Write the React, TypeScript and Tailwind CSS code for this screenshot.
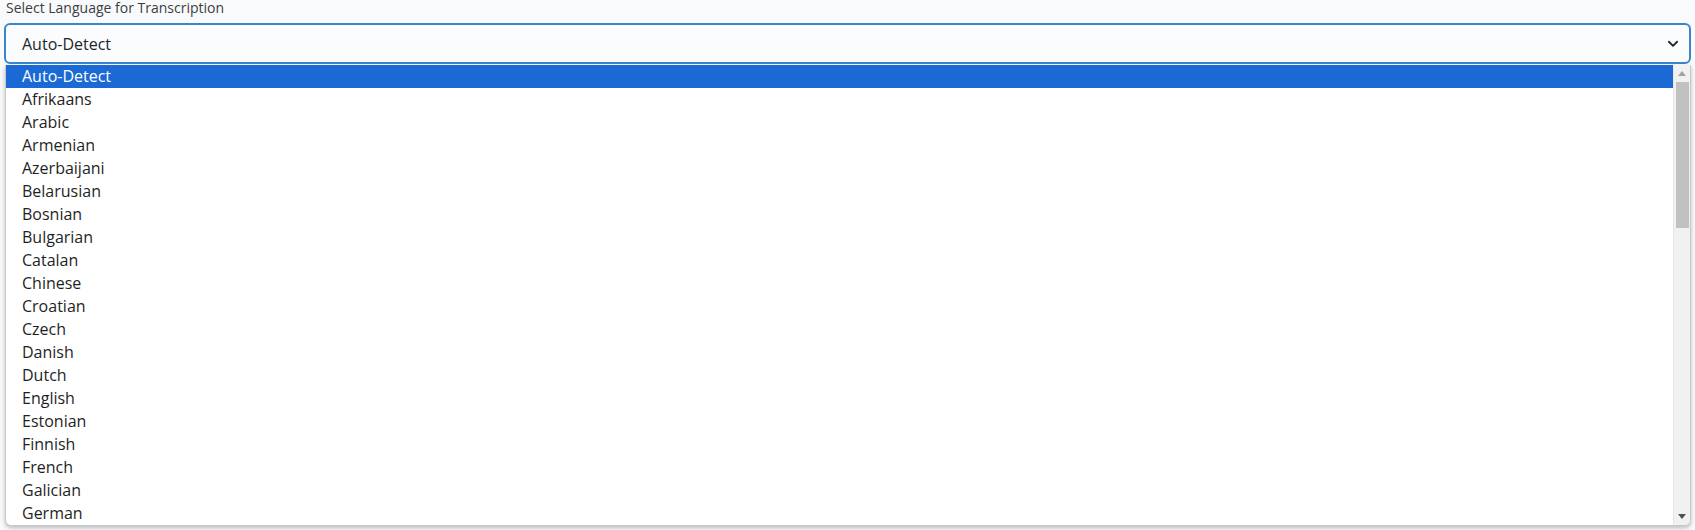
import React from "react";

const languages = [
  "Auto-Detect",
  "Afrikaans",
  "Arabic",
  "Armenian",
  "Azerbaijani",
  "Belarusian",
  "Bosnian",
  "Bulgarian",
  "Catalan",
  "Chinese",
  "Croatian",
  "Czech",
  "Danish",
  "Dutch",
  "English",
  "Estonian",
  "Finnish",
  "French",
  "Galician",
  "German",
];

export default function App() {
  return (
    <div className="min-h-[530px] bg-[#f9fafc] font-['Open_Sans',sans-serif] text-[#212529]">
      <div className="relative px-[4px]">
        {/* Label */}
        <div className="pl-[2px] text-[14px] leading-[16px] text-[#3d3d3d]">
          Select Language for Transcription
        </div>

        {/* Select box */}
        <div className="mt-[7px] flex h-[41px] w-[1687px] items-center justify-between rounded-[6px] border-[2px] border-[#3d84cc] bg-[#fbfcfe] pl-[16px] pr-[10px]">
          <span className="text-[16px] leading-[22px] text-[#212529]">Auto-Detect</span>
          <svg width="12" height="12" viewBox="0 0 16 16" fill="none">
            <path d="M2.5 5 8 10.5 13.5 5" stroke="#212529" strokeWidth="2.4" strokeLinecap="round" strokeLinejoin="round" />
          </svg>
        </div>

        {/* Open option list */}
        <div className="absolute left-[5px] top-[65px] flex h-[461px] w-[1686px] overflow-hidden rounded-b-[6px] border border-t-0 border-[#c9c9c9] bg-white shadow-[0_2px_4px_rgba(0,0,0,0.25)]">
          <ul className="flex-1">
            {languages.map((lang, i) => (
              <li
                key={lang}
                className={
                  i === 0
                    ? "h-[23px] bg-[#1a69d4] pl-[16px] text-[16px] leading-[23px] text-white"
                    : "h-[23px] pl-[16px] text-[16px] leading-[23px] text-[#1f1f1f]"
                }
              >
                {lang}
              </li>
            ))}
          </ul>

          {/* Scrollbar */}
          <div className="flex w-[17px] flex-col items-center border-l border-[#e6e6e6] bg-[#f1f1f1]">
            <div className="flex h-[17px] w-full items-center justify-center">
              <svg width="8" height="5" viewBox="0 0 8 5">
                <path d="M0 5 4 0 8 5Z" fill="#a3a3a3" />
              </svg>
            </div>
            <div className="h-[146px] w-[13px] bg-[#c1c1c1]" />
            <div className="flex-1" />
            <div className="flex h-[17px] w-full items-center justify-center">
              <svg width="8" height="5" viewBox="0 0 8 5">
                <path d="M0 0 8 0 4 5Z" fill="#505050" />
              </svg>
            </div>
          </div>
        </div>
      </div>
    </div>
  );
}
